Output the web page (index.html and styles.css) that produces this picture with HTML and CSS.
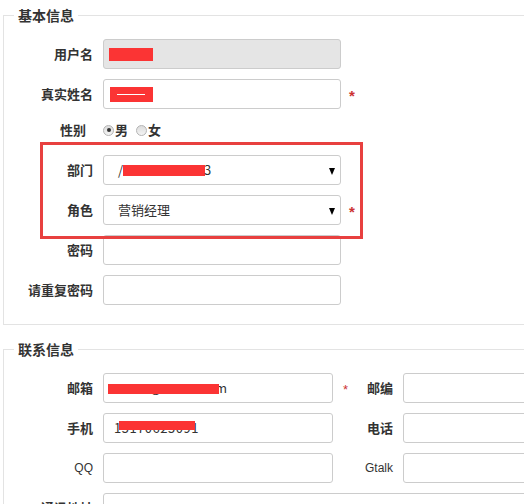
FILE: index.html
```html
<!DOCTYPE html>
<html lang="zh-CN">
<head>
<meta charset="utf-8">
<link rel="stylesheet" href="styles.css">
</head>
<body>
<fieldset class="group">
  <legend class="legend">基本信息</legend>
  <div class="form basic">
    <label class="lbl">用户名</label>
    <div class="box disabled"><span class="redact r-user"></span></div>
    <span></span>

    <label class="lbl">真实姓名</label>
    <div class="box"><span class="redact r-name"><span class="dash"></span></span></div>
    <span class="star">*</span>

    <label class="lbl gender-lbl">性别</label>
    <div class="gender">
      <span class="radio checked"></span><span class="opt">男</span>
      <span class="radio"></span><span class="opt">女</span>
    </div>
    <span></span>

    <label class="lbl">部门</label>
    <div class="box select"><span class="val">/</span><span class="redact r-dept"></span><span class="val tail">3</span><span class="arrow"></span></div>
    <span></span>

    <label class="lbl">角色</label>
    <div class="box select"><span class="val">营销经理</span><span class="arrow"></span></div>
    <span class="star">*</span>

    <label class="lbl">密码</label>
    <div class="box"></div>
    <span></span>

    <label class="lbl">请重复密码</label>
    <div class="box"></div>
    <span></span>
  </div>
</fieldset>

<fieldset class="group second">
  <legend class="legend">联系信息</legend>
  <div class="form contact">
    <label class="lbl">邮箱</label>
    <div class="box"><span class="val mail-at">@</span><span class="val mail-m">m</span><span class="redact r-mail"></span></div>
    <div class="mid"><span class="star small">*</span><label class="lbl">邮编</label></div>
    <div class="box"></div>

    <label class="lbl">手机</label>
    <div class="box"><span class="val phone">15170625091</span><span class="redact r-phone"></span></div>
    <div class="mid end"><label class="lbl">电话</label></div>
    <div class="box"></div>

    <label class="lbl latin">QQ</label>
    <div class="box"></div>
    <div class="mid end"><label class="lbl latin">Gtalk</label></div>
    <div class="box"></div>

    <label class="lbl">通讯地址</label>
    <div class="box wide"></div>
  </div>
</fieldset>

<div class="annotation"></div>
</body>
</html>
```
FILE: styles.css
```css
html, body {
  margin: 0;
  padding: 0;
  overflow: hidden;
  background: #fff;
}
body {
  width: 524px;
  height: 504px;
  position: relative;
  font-family: "Noto Sans CJK SC", "Liberation Sans", sans-serif;
  color: #333;
}
.group {
  margin: 5px 0 0 3px;
  padding: 0;
  width: 620px;
  border: 1px solid #e3e3e3;
  border-right: none;
  min-width: 0;
}
.group.second {
  margin-top: 14px;
}
.legend {
  margin-left: 10px;
  padding: 0 4px;
  font-size: 14px;
  font-weight: bold;
  line-height: 20px;
  color: #333;
}
.form {
  display: grid;
  column-gap: 10px;
  row-gap: 10px;
  align-items: center;
}
.basic {
  grid-template-columns: 89px 238px 20px;
  padding: 14px 0 19px 0;
}
.contact {
  grid-template-columns: 89px 230px 50px 200px;
  padding: 14px 0 0 0;
}
.lbl {
  text-align: right;
  font-size: 13px;
  font-weight: bold;
  line-height: 20px;
  white-space: nowrap;
}
.lbl.latin {
  font-family: "Liberation Sans", sans-serif;
  font-weight: normal;
  font-size: 12px;
}
.gender-lbl {
  padding-right: 7px;
}
.box {
  height: 30px;
  box-sizing: border-box;
  border: 1px solid #ccc;
  border-radius: 3px;
  background: #fff;
  position: relative;
  display: flex;
  align-items: center;
  padding-left: 14px;
  font-size: 12px;
}
.box.disabled {
  background: #e5e5e5;
}
.box.wide {
  grid-column: 2 / 5;
}
.val {
  font-size: 13px;
  color: #333;
  line-height: 16px;
}
.select .arrow {
  position: absolute;
  right: 5px;
  top: 12px;
  width: 0;
  height: 0;
  border-left: 3.5px solid transparent;
  border-right: 3.5px solid transparent;
  border-top: 7px solid #000;
}
.redact {
  position: absolute;
  background: #fb3434;
}
.r-user { left: 5px; top: 8px; width: 44px; height: 13px; }
.r-name { left: 6px; top: 7px; width: 43px; height: 15px; }
.r-name .dash {
  position: absolute;
  left: 7px;
  right: 8px;
  top: 7px;
  height: 1px;
  background: #fff;
}
.r-dept { left: 19px; top: 9px; width: 82px; height: 11px; }
.tail { position: absolute; left: 100px; top: 6px; }
.r-mail { left: 4px; top: 10px; width: 111px; height: 10px; }
.mail-at { position: absolute; left: 46px; top: 6px; }
.mail-m { position: absolute; left: 111px; top: 6px; }
.phone { position: absolute; left: 10px; top: 6px; letter-spacing: 0.5px; }
.r-phone { left: 15px; top: 7px; width: 76px; height: 9px; }
.star {
  color: #cc3333;
  font-family: "Liberation Sans", sans-serif;
  font-size: 15px;
  font-weight: bold;
  margin-left: -2px;
  line-height: 14px;
  padding-top: 4px;
}
.star.small {
  font-size: 13px;
  margin-left: 0;
  font-weight: normal;
}
.mid {
  display: flex;
  justify-content: space-between;
  align-items: center;
}
.mid.end {
  justify-content: flex-end;
}
.gender {
  display: flex;
  align-items: center;
  height: 22px;
  margin-bottom: 4px;
  font-size: 13px;
  font-weight: bold;
}
.gender-lbl {
  margin-bottom: 4px;
}
.radio {
  width: 11px;
  height: 11px;
  box-sizing: border-box;
  border-radius: 50%;
  border: 1px solid #b4b4b4;
  background: linear-gradient(#dcdcdc, #f4f4f4);
  position: relative;
  margin-right: 1px;
}
.radio.checked::after {
  content: "";
  position: absolute;
  left: 2.5px;
  top: 2.5px;
  width: 4px;
  height: 4px;
  border-radius: 50%;
  background: #333;
}
.opt {
  margin-right: 8px;
  line-height: 20px;
}
.annotation {
  position: absolute;
  left: 40px;
  top: 142px;
  width: 323px;
  height: 97px;
  box-sizing: border-box;
  border: 3px solid #e8403f;
}
```
